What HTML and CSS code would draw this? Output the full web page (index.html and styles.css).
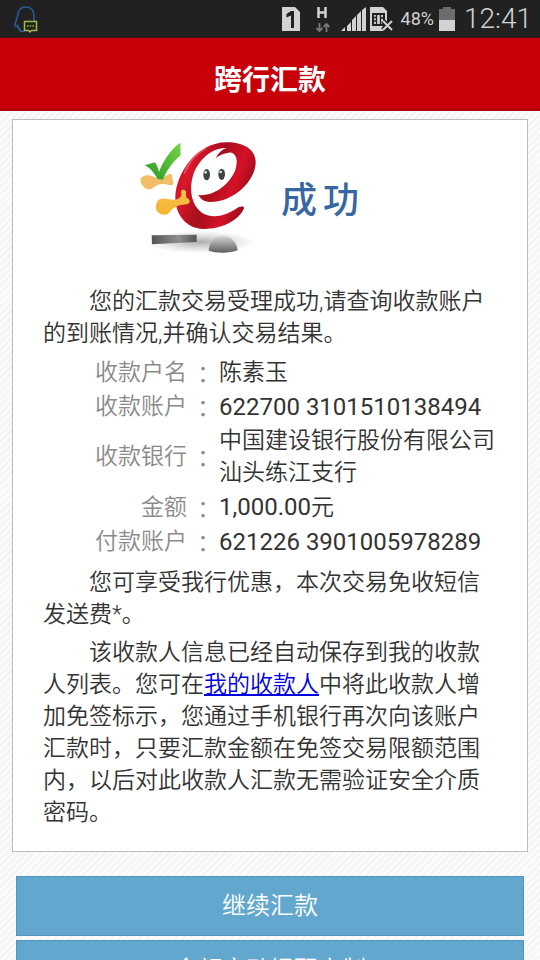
FILE: index.html
```html
<!DOCTYPE html>
<html lang="zh-Hans">
<head>
<meta charset="utf-8">
<meta name="viewport" content="width=device-width, initial-scale=1">
<title>跨行汇款</title>
<link rel="stylesheet" href="styles.css">
</head>
<body>
<div class="statusbar">
  <svg class="notice" width="26" height="30" viewBox="0 0 26 30" aria-hidden="true">
    <path d="M20 17V12C20 6 16.500 3 12 3S4 6 3.500 12C3 16 1 18 1 21c0 2 1 2 2.500.5C4 24 5 25 6 25.500 5 27 7 28 10 27" fill="none" stroke="#275f9d" stroke-width="1.500"/>
    <path d="M10.500 17.500h12v9h-5l-1.500 1.500-1.500-1.500h-4z" fill="#1c2412" stroke="#a3b850" stroke-width="1.500"/>
    <path d="M13 22h7.500" stroke="#a3b850" stroke-width="1.500" stroke-dasharray="1.500 1.200"/>
  </svg>
  <svg width="20" height="26" viewBox="0 0 20 26" aria-hidden="true">
    <path d="M1 1h13l5 5v19H1z" fill="#d2d2d2"/>
    <path d="M5.500 8 10 5h3v17h-3V9.500l-4.500 2z" fill="#212121"/>
  </svg>
  <svg width="24" height="28" viewBox="0 0 24 28" aria-hidden="true">
    <path d="M9.500 2v11M16.500 2v11M9 7.500h8" stroke="#d2d2d2" stroke-width="2.500" fill="none"/>
    <path d="M10.500 18v8M7.500 23l3 3 3-3M17.500 27v-8M14.500 22l3-3 3 3" stroke="#7a7a7a" stroke-width="1.800" fill="none"/>
  </svg>
  <svg width="52" height="26" viewBox="0 0 52 26" aria-hidden="true">
    <path d="M0 25 4 21v4zM6 20l4-4v9H6zM11 14l4-4v15h-4zM16 9l4-4v20h-4zM21 4l4-3v24h-4z" fill="#d2d2d2"/>
    <path d="M29 1h13l4 4v11l-4 3v6H29z" fill="#d2d2d2"/>
    <path d="M32 8h11v11H32z" fill="#d2d2d2" stroke="#212121" stroke-width="2"/>
    <path d="M35.500 8v11M39.500 8v11M32 11.500h4M32 15h4M39 12h4" stroke="#212121" stroke-width="1.300"/>
    <path d="m42 15 9 9m0-9-9 9" stroke="#212121" stroke-width="5"/>
    <path d="m42 15 9 9m0-9-9 9" stroke="#d2d2d2" stroke-width="2"/>
  </svg>
  <div class="power">
    <span>48%</span>
    <svg width="18" height="26" viewBox="0 0 18 26" aria-hidden="true">
      <path d="M5 1h8v2h4v12H1V3h4z" fill="#6c6c6c"/>
      <path d="M1 14h16v11H1z" fill="#d2d2d2"/>
    </svg>
  </div>
  <time class="clock">12:41</time>
</div>
<header class="titlebar"><h1>跨行汇款</h1></header>
<main class="page">
  <section class="card">
    <div class="result">
      <svg class="mascot" width="135" height="130" viewBox="0 0 405 390" aria-hidden="true">
        <defs>
          <linearGradient id="red" x1="0" y1="0" x2="1" y2="0.400">
            <stop offset="0" stop-color="#930d19"/><stop offset="0.250" stop-color="#dc172b"/>
            <stop offset="0.550" stop-color="#a50f1c"/><stop offset="0.800" stop-color="#d51227"/><stop offset="1" stop-color="#9a0c1a"/>
          </linearGradient>
          <linearGradient id="green" x1="0" y1="1" x2="1" y2="0">
            <stop offset="0" stop-color="#269b28"/><stop offset="1" stop-color="#79d447"/>
          </linearGradient>
          <linearGradient id="gold" x1="0" y1="0" x2="0" y2="1">
            <stop offset="0" stop-color="#f8c24a"/><stop offset="1" stop-color="#f4b431"/>
          </linearGradient>
          <linearGradient id="stone" x1="0" y1="0" x2="0" y2="1">
            <stop offset="0" stop-color="#d8d8d8"/><stop offset="1" stop-color="#5e5e5e"/>
          </linearGradient>
          <linearGradient id="slab" x1="0" y1="0" x2="1" y2="0">
            <stop offset="0" stop-color="#555"/><stop offset="0.600" stop-color="#8e8e8e"/><stop offset="1" stop-color="#555"/>
          </linearGradient>
          <radialGradient id="shadow">
            <stop offset="0" stop-color="#888" stop-opacity="0.700"/><stop offset="1" stop-color="#aaa" stop-opacity="0"/>
          </radialGradient>
        </defs>
        <ellipse cx="210" cy="336" rx="165" ry="34" fill="url(#shadow)"/>
        <path d="M65 316 200 314v22L66 343z" fill="url(#slab)"/>
        <path d="M236 362c0-22 18-45 44-45 24 0 43 26 43 44-20 9-67 9-87 1z" fill="url(#stone)"/>
        <path d="M342 235C325 275 270 298 220 297 165 294 135 250 136 200 138 130 200 37 290 37 345 37 378 60 377 100 374 155 310 217 240 216 222 215 212 208 205 195 255 200 300 160 316 120 326 90 318 65 296 68 280 70 270 74 258 84 265 68 278 58 290 54 245 50 200 95 188 140 175 190 190 240 230 255 265 266 300 250 325 232 334 228 344 229 342 235z" fill="url(#red)"/>
        <path d="M164 128c12-30 34-58 62-72" fill="none" stroke="#f0808a" stroke-width="6" stroke-linecap="round" opacity="0.550"/>
        <ellipse cx="230" cy="134" rx="10" ry="17" fill="#3e4444"/>
        <ellipse cx="275" cy="133" rx="10" ry="17" fill="#3e4444"/>
        <circle cx="227" cy="127" r="4" fill="#dfe4e4"/>
        <circle cx="272" cy="126" r="4" fill="#dfe4e4"/>
        <path d="M40 139c15-8 30 2 48 7 14 1 24-16 33-14 9 2 4 12 8 20 4 9-1 16-12 13-18-6-34-3-44 6-16 14-30 6-38-8-5-9-5-19 5-24z" fill="#f3bd67"/>
        <path d="M44 106 75 97c5 8 9 17 12 28C103 86 124 56 151 38L152 76C131 92 111 119 99 149L83 147C73 130 60 113 44 106z" fill="url(#green)"/>
        <path d="M86 209c17-9 34 3 51 0 12-2 16-9 17-17-4-12 6-17 13-9 3 5-1 15 4 21 12 6 10 18-2 19-14 1-29 4-38 11-10 7-12 19-25 20-20 1-31-14-28-27 1-8 3-15 8-18z" fill="url(#gold)"/>
      </svg>
      <p class="result-text"><span>成</span><span>功</span></p>
    </div>
    <p class="para">您的汇款交易受理成功,请查询收款账户的到账情况,并确认交易结果。</p>
    <table class="details">
      <tr><th scope="row">收款户名</th><td class="colon" lang="zh-Hant">：</td><td>陈素玉</td></tr>
      <tr><th scope="row">收款账户</th><td class="colon" lang="zh-Hant">：</td><td class="number">622700 3101510138494</td></tr>
      <tr><th scope="row">收款银行</th><td class="colon" lang="zh-Hant">：</td><td>中国建设银行股份有限公司汕头练江支行</td></tr>
      <tr><th scope="row">金额</th><td class="colon" lang="zh-Hant">：</td><td><span class="number">1,000.00</span>元</td></tr>
      <tr><th scope="row">付款账户</th><td class="colon" lang="zh-Hant">：</td><td class="number">621226 3901005978289</td></tr>
    </table>
    <p class="para">您可享受我行优惠，本次交易免收短信发送费*。</p>
    <p class="para">该收款人信息已经自动保存到我的收款人列表。您可在<a href="#payees">我的收款人</a>中将此收款人增加免签标示，您通过手机银行再次向该账户汇款时，只要汇款金额在免签交易限额范围内，以后对此收款人汇款无需验证安全介质密码。</p>
  </section>
  <div class="actions">
    <button type="button">继续汇款</button>
    <button type="button">余额变动提醒定制</button>
  </div>
</main>
</body>
</html>
```
FILE: styles.css
```css
* {
  box-sizing: border-box;
}

body {
  margin: 0;
  height: 100vh;
  display: flex;
  flex-direction: column;
  overflow: hidden;
  font-family: Roboto, "Noto Sans CJK SC", sans-serif;
  font-size: 23px;
  font-weight: 350;
  line-height: 32px;
  color: #333;
}

h1,
p {
  margin: 0;
}

svg {
  display: block;
}

.statusbar {
  flex: none;
  height: 38px;
  padding: 0 8px 0 14px;
  display: flex;
  align-items: center;
  gap: 8px;
  background: #212121;
  border-bottom: 1px solid #4a1013;
  color: #d2d2d2;
}

.notice {
  margin-right: auto;
}

.power {
  display: flex;
  align-items: center;
  gap: 4px;
  font-size: 18px;
  font-weight: 400;
}

.clock {
  font-size: 28px;
  font-weight: 300;
}

.titlebar {
  flex: none;
  height: 73px;
  padding-top: 15px;
  display: flex;
  align-items: center;
  justify-content: center;
  background: #c70009;
  border-bottom: 2px solid #a8000c;
}

.titlebar h1 {
  font-size: 28px;
  font-weight: 700;
  color: #fff;
}

.page {
  flex: 1;
  min-height: 0;
  overflow: hidden;
  padding: 8px 12px;
  background: repeating-linear-gradient(135deg, #fbfbfb 0 3px, #f4f4f4 3px 5px);
}

.card {
  padding: 10px 30px 16px;
  background: #fff;
  border: 1px solid #bdbdbd;
}

.result {
  display: flex;
  align-items: center;
  gap: 16px;
  padding-left: 87px;
  margin-bottom: 26px;
}

.result-text {
  display: flex;
  gap: 6px;
  padding-top: 12px;
  font-size: 36px;
  font-weight: 500;
  color: #3767a3;
}

.para {
  text-indent: 2em;
  margin-bottom: 6px;
}

.details {
  width: 100%;
  margin-bottom: 8px;
  border-collapse: collapse;
}

.details th,
.details td {
  padding: 1px 0;
  font-weight: inherit;
  text-align: left;
}

.details th {
  width: 144px;
  color: #8a8a8a;
  text-align: right;
}

.details .colon {
  width: 32px;
  color: #8a8a8a;
  text-align: center;
  font-family: "Noto Sans CJK TC", sans-serif;
}

.details .number {
  font-size: 24px;
  font-weight: 400;
}

a {
  color: #0000e0;
  text-underline-offset: 2px;
}

.actions {
  display: grid;
  gap: 4px;
  margin-top: 24px;
  padding: 0 4px;
}

.actions button {
  height: 60px;
  padding: 0;
  border: 1px solid #5295b9;
  border-radius: 0;
  background: #62a8ce;
  color: #fff;
  font: 350 24px/32px Roboto, "Noto Sans CJK SC", sans-serif;
}
```
